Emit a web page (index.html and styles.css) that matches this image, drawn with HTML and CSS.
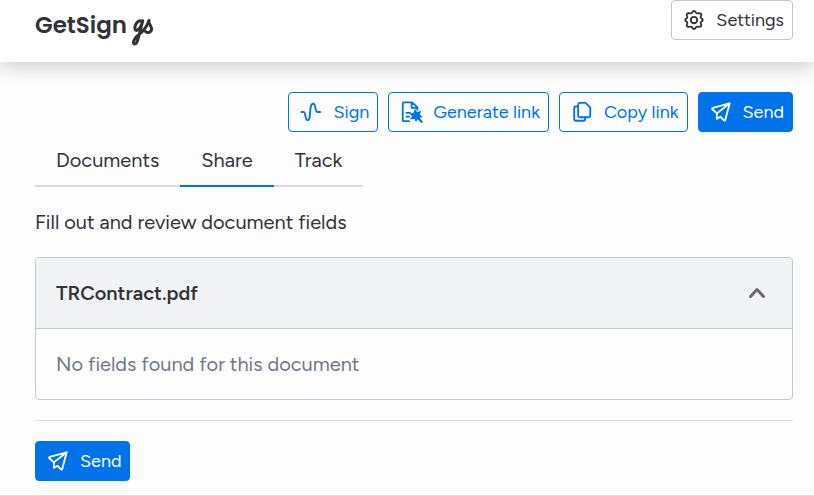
FILE: index.html
```html
<!DOCTYPE html>
<html lang="en">
<head>
    <meta charset="UTF-8">
    <meta name="viewport" content="width=device-width, initial-scale=1.0">
    <title>GetSign</title>
    <link rel="stylesheet" href="styles.css">
</head>
<body>
    <svg class="sprite" aria-hidden="true">
        <symbol id="icon-send" viewBox="0 0 24 24">
            <path d="M21.500 2.500 3 7.500c-.7.200-.9 1-.4 1.500L7.500 13.500v6l3.800-2.300 4 4c.4.400 1 .2 1.200-.3L21.500 2.500 7.500 13.500"/>
        </symbol>
    </svg>
    <header class="header">
        <div class="logo">
            <span>GetSign</span>
            <svg class="logo-mark" viewBox="0 0 24 32" aria-hidden="true">
                <path d="M11 6C9.500 3.500 6 5 4.500 9 3.200 12.800 4.200 15.500 6.500 14 9 12.500 10.700 9 11.700 4.800L7.200 22.500C6.200 26.500 4.800 28.500 3.200 28 1.400 27 2.800 23 6.800 19.500 11.500 16 16 11 18 4.500 17 8 20.500 9 20.500 13 20.500 16.500 16.500 17.500 14.500 15.500"/>
            </svg>
        </div>
        <button class="btn btn-settings">
            <svg class="icon" viewBox="0 0 24 24" aria-hidden="true">
                <path d="M9.700 4.200 10.900 2.600q1.100-.8 2.200 0l1.200 1.600q.7.700 1.600.6l2.500-.3q1.300.3 1.700 1.700l-.8 2.300q-.1.900.5 1.500l1.500 1.200q.5.800 0 1.600l-1.500 1.200q-.6.600-.5 1.500l.8 2.300q-.4 1.400-1.700 1.700l-2.500-.3q-.9-.1-1.600.6l-1.200 1.600q-1.100.8-2.200 0L9.700 19.800q-.7-.7-1.600-.6l-2.500.3q-1.300-.3-1.700-1.700l.8-2.300q.1-.9-.5-1.500l-1.500-1.200q-.5-.8 0-1.600l1.500-1.200q.6-.6.500-1.500L3.900 6.200q.4-1.400 1.700-1.700l2.500.3q.9.1 1.600-.6Z"/>
                <circle cx="12" cy="12" r="3.500"/>
            </svg>
            Settings
        </button>
    </header>
    <main class="content">
        <div class="actions">
            <button class="btn">
                <svg class="icon" viewBox="0 0 24 24" aria-hidden="true">
                    <path d="M1.500 12H4c1 0 1.200.8 1.400 2 .8 4.500 1 7 2.800 7 2.400 0 2.400-3 2.800-8.500.4-6 .6-9.500 3.300-9.500 2.200 0 2.400 3.500 3 7 .2 1.200.6 2 1.700 2h3"/>
                </svg>
                Sign
            </button>
            <button class="btn">
                <svg class="icon" viewBox="0 0 24 24" aria-hidden="true">
                    <path d="M10 22H4.200c-.7 0-1.200-.5-1.200-1.200V2.700c0-.7.500-1.200 1.200-1.200h9L19 7V9.500M12.700 1.500v6H19M7 13h4M7 17h3"/>
                    <path class="solid" d="m16.500 8.500 2 3.500 4.500-1.200-1.300 4.200 3.300 2.500-3.500.8 3.500 4.700-1.400 1.200-4.400-4.200-1.700 3-1.800-3.500-5 .5 2.500-3.500-3-3 4.200-.3z"/>
                </svg>
                Generate link
            </button>
            <button class="btn">
                <svg class="icon" viewBox="0 0 24 24" aria-hidden="true">
                    <path d="M9.500 2h6.300L21 7v9c0 1-.8 1.700-1.700 1.700H9.500c-1 0-1.700-.7-1.700-1.700V3.700C7.800 2.800 8.500 2 9.500 2Z"/>
                    <path d="M7.800 6H5.200C4.200 6 3.500 6.700 3.500 7.700v12c0 1 .7 1.800 1.700 1.800h8.500c1 0 1.800-.7 1.800-1.800v-2"/>
                </svg>
                Copy link
            </button>
            <button class="btn btn-primary">
                <svg class="icon" aria-hidden="true"><use href="#icon-send"/></svg>
                Send
            </button>
        </div>
        <nav class="tabs">
            <a class="tab" href="#documents">Documents</a>
            <a class="tab active" href="#share">Share</a>
            <a class="tab" href="#track">Track</a>
        </nav>
        <p class="intro">Fill out and review document fields</p>
        <section class="panel">
            <button class="panel-head" aria-expanded="true">
                TRContract.pdf
                <svg class="chevron" viewBox="0 0 20 20" aria-hidden="true">
                    <path d="m3.500 13.500 6.500-7 6.500 7"/>
                </svg>
            </button>
            <div class="panel-body">No fields found for this document</div>
        </section>
        <div class="footer">
            <button class="btn btn-primary">
                <svg class="icon" aria-hidden="true"><use href="#icon-send"/></svg>
                Send
            </button>
        </div>
    </main>
</body>
</html>
```
FILE: styles.css
```css
* {
    box-sizing: border-box;
}
body {
    margin: 0;
    background: #fdfdfe;
    color: #323338;
    font-family: Figtree, Lato, "Liberation Sans", sans-serif;
    font-size: 20px;
    line-height: 24px;
}
button {
    font: inherit;
    cursor: pointer;
}
.sprite {
    display: none;
}
.header {
    display: flex;
    justify-content: space-between;
    align-items: flex-start;
    height: 62px;
    padding: 0 21px 0 35px;
    background: white;
    box-shadow: 0 4px 20px rgba(0, 0, 0, 0.2);
}
.logo {
    display: flex;
    align-items: flex-start;
    gap: 4px;
    padding-top: 11px;
    font-family: Poppins, Inter, sans-serif;
    font-size: 23px;
    font-weight: 600;
    line-height: 28px;
}
.logo-mark {
    width: 24px;
    height: 32px;
    margin-top: 5px;
    fill: none;
    stroke: #323338;
    stroke-width: 3;
    stroke-linecap: round;
    stroke-linejoin: round;
}
.btn {
    display: flex;
    align-items: center;
    gap: 11px;
    height: 40px;
    padding: 0 8px 0 11px;
    border: 1px solid #0073ea;
    border-radius: 4px;
    background: transparent;
    color: #0073ea;
    font-size: 18px;
    white-space: nowrap;
}
.btn-settings {
    border-color: #c3c6d4;
    color: #323338;
}
.btn-primary {
    background: #0073ea;
    color: white;
}
.icon {
    width: 22px;
    height: 22px;
    fill: none;
    stroke: currentColor;
    stroke-width: 2;
    stroke-linecap: round;
    stroke-linejoin: round;
    overflow: visible;
}
.icon .solid {
    fill: currentColor;
    stroke: none;
}
.content {
    padding: 30px 21px 14px 35px;
    border-bottom: 1px solid #dcdfe4;
}
.actions {
    display: flex;
    justify-content: flex-end;
    flex-wrap: wrap;
    gap: 10px;
}
.tabs {
    display: flex;
    width: fit-content;
    height: 55px;
    border-bottom: 2px solid #d9dbea;
}
.tab {
    height: 55px;
    padding: 16px 21px 0;
    color: #323338;
    text-decoration: none;
}
.tab.active {
    border-bottom: 2px solid #0073ea;
}
.intro {
    margin: 23px 0;
}
.panel {
    border: 1px solid #c3c6d4;
    border-radius: 4px;
    overflow: hidden;
}
.panel-head {
    display: flex;
    justify-content: space-between;
    align-items: center;
    width: 100%;
    height: 71px;
    padding: 0 25px 0 20px;
    border: none;
    border-bottom: 1px solid #c3c6d4;
    background: #f2f3f5;
    color: #323338;
    font-weight: 600;
}
.panel-body {
    padding: 23px 20px;
    color: #747883;
}
.chevron {
    width: 20px;
    height: 20px;
    fill: none;
    stroke: #676879;
    stroke-width: 3;
    stroke-linecap: round;
    stroke-linejoin: round;
}
.footer {
    margin-top: 20px;
    padding-top: 20px;
    border-top: 1px solid #e1e3e8;
}
```
